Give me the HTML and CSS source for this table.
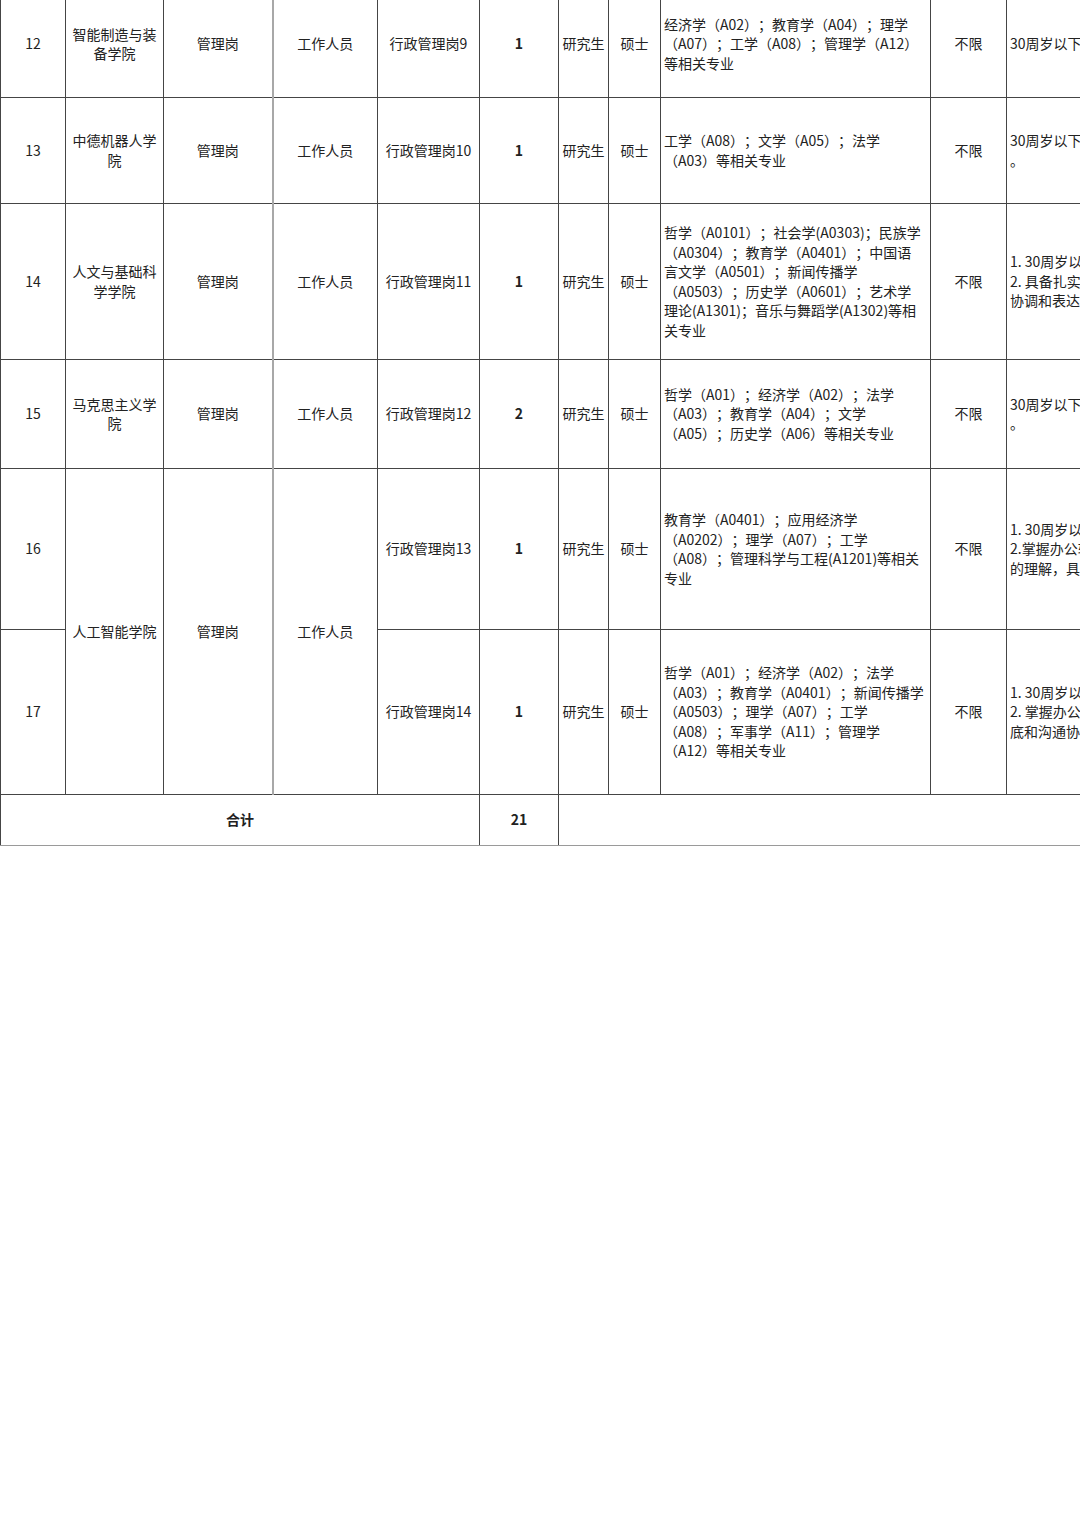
FILE: index.html
```html
<!DOCTYPE html>
<html lang="zh-CN">
<head>
<meta charset="utf-8">
<title>岗位表</title>
<link rel="stylesheet" href="styles.css">
</head>
<body>
<table class="jobs">
  <colgroup>
    <col class="c-no"><col class="c-dept"><col class="c-type"><col class="c-kind"><col class="c-post"><col class="c-num"><col class="c-edu"><col class="c-deg"><col class="c-major"><col class="c-pol"><col class="c-note">
  </colgroup>
  <tbody>
    <tr class="r12">
      <td>12</td><td>智能制造与装备学院</td><td>管理岗</td><td class="gl">工作人员</td><td>行政管理岗9</td><td class="num">1</td><td>研究生</td><td>硕士</td>
      <td class="major">经济学（A02）；教育学（A04）；理学<br>（A07）；工学（A08）；管理学（A12）<br>等相关专业</td>
      <td>不限</td><td class="note">30周岁以下</td>
    </tr>
    <tr class="r13">
      <td>13</td><td>中德机器人学院</td><td>管理岗</td><td class="gl">工作人员</td><td>行政管理岗10</td><td class="num">1</td><td>研究生</td><td>硕士</td>
      <td class="major">工学（A08）；文学（A05）；法学<br>（A03）等相关专业</td>
      <td>不限</td><td class="note">30周岁以下<br>。</td>
    </tr>
    <tr class="r14">
      <td>14</td><td>人文与基础科学学院</td><td>管理岗</td><td class="gl">工作人员</td><td>行政管理岗11</td><td class="num">1</td><td>研究生</td><td>硕士</td>
      <td class="major">哲学（A0101）；社会学(A0303)；民族学<br>（A0304）；教育学（A0401）；中国语<br>言文学（A0501）；新闻传播学<br>（A0503）；历史学（A0601）；艺术学<br>理论(A1301)；音乐与舞蹈学(A1302)等相<br>关专业</td>
      <td>不限</td><td class="note">1. 30周岁以下；<br>2. 具备扎实的文字功底，较强的沟通<br>协调和表达能力。</td>
    </tr>
    <tr class="r15">
      <td>15</td><td>马克思主义学院</td><td>管理岗</td><td class="gl">工作人员</td><td>行政管理岗12</td><td class="num">2</td><td>研究生</td><td>硕士</td>
      <td class="major">哲学（A01）；经济学（A02）；法学<br>（A03）；教育学（A04）；文学<br>（A05）；历史学（A06）等相关专业</td>
      <td>不限</td><td class="note">30周岁以下<br>。</td>
    </tr>
    <tr class="r16">
      <td>16</td><td rowspan="2">人工智能学院</td><td rowspan="2">管理岗</td><td rowspan="2" class="gl">工作人员</td><td>行政管理岗13</td><td class="num">1</td><td>研究生</td><td>硕士</td>
      <td class="major">教育学（A0401）；应用经济学<br>（A0202）；理学（A07）；工学<br>（A08）；管理科学与工程(A1201)等相关<br>专业</td>
      <td>不限</td><td class="note">1. 30周岁以下；<br>2.掌握办公软件操作，对行政工作有<br>的理解，具备良好的沟通能力。</td>
    </tr>
    <tr class="r17">
      <td>17</td><td>行政管理岗14</td><td class="num">1</td><td>研究生</td><td>硕士</td>
      <td class="major">哲学（A01）；经济学（A02）；法学<br>（A03）；教育学（A0401）；新闻传播学<br>（A0503）；理学（A07）；工学<br>（A08）；军事学（A11）；管理学<br>（A12）等相关专业</td>
      <td>不限</td><td class="note">1. 30周岁以下；<br>2. 掌握办公软件操作，具备较好的文字<br>底和沟通协调能力。</td>
    </tr>
    <tr class="rsum">
      <td colspan="5" class="sum">合计</td><td class="num">21</td><td colspan="5"></td>
    </tr>
  </tbody>
</table>
</body>
</html>
```

FILE: styles.css
```css
html, body {
  margin: 0;
  padding: 0;
  background: #ffffff;
  overflow: hidden;
}

body {
  font-family: "Noto Sans CJK SC", "Noto Sans", sans-serif;
  font-size: 14px;
  color: #222222;
  text-spacing-trim: space-all;
}

.jobs {
  border-collapse: collapse;
  table-layout: fixed;
  width: 1200px;
  margin-top: -10px;
}

.c-no { width: 65px; }
.c-dept { width: 98px; }
.c-type { width: 109px; }
.c-kind { width: 105px; }
.c-post { width: 102px; }
.c-num { width: 79px; }
.c-edu { width: 50px; }
.c-deg { width: 52px; }
.c-major { width: 270px; }
.c-pol { width: 76px; }
.c-note { width: 194px; }

.jobs td {
  border: 1px solid #454545;
  padding: 0 2px;
  text-align: center;
  vertical-align: middle;
  line-height: 19.5px;
  overflow: hidden;
  text-spacing-trim: space-all;
}

.jobs td.gl {
  border-left: 2px solid #a8a8a8;
}

.jobs td.major,
.jobs td.note {
  text-align: left;
  padding: 0 3px;
  white-space: nowrap;
}

.jobs td.num,
.jobs td.sum {
  font-weight: bold;
}

.r12 { height: 107px; }
.r13 { height: 106px; }
.r14 { height: 156px; }
.r15 { height: 109px; }
.r16 { height: 161px; }
.r17 { height: 165px; }
.rsum { height: 51px; }

.rsum td {
  border-bottom: 1px solid #9a9a9a;
}
```
